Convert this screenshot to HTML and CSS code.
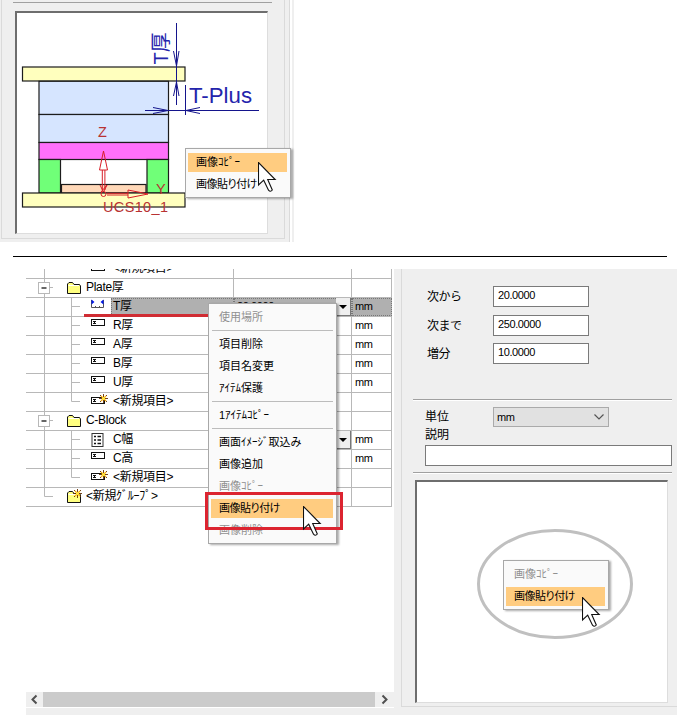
FILE: index.html
```html
<!DOCTYPE html>
<html lang="ja">
<head>
<meta charset="utf-8">
<title>画像貼り付け</title>
<link rel="stylesheet" href="styles.css">
</head>
<body>
<svg class="defs" width="0" height="0">
  <symbol id="cursor" viewBox="0 0 19 31"><path d="M.5.5V23L5.7 18.2 10.5 28.2Q12.5 30.5 14.3 28L9.7 17.5H17.2Z" fill="#fff" stroke="#111" stroke-width="1.1"/></symbol>
  <symbol id="g-group" viewBox="0 0 60 19"><path d="M18.5 0V19M23 8.5H27" stroke="#b8b8b8"/><rect x="12.5" y="3.5" width="11" height="11" fill="#fff" stroke="#b8b8b8"/><path d="M15.500 9H20.500" stroke="#000" stroke-width="1.200"/></symbol>
  <symbol id="g-item" viewBox="0 0 60 19"><path d="M18.500 0V19M45.500 0V19M45 8.500H54" fill="none" stroke="#b8b8b8"/></symbol>
  <symbol id="g-itemend" viewBox="0 0 60 19"><path d="M18.500 0V19M45.500 0V8.500H54" fill="none" stroke="#b8b8b8"/></symbol>
  <symbol id="g-end" viewBox="0 0 60 19"><path d="M18.500 0V8.500H27" fill="none" stroke="#b8b8b8"/></symbol>
  <symbol id="folder" viewBox="0 0 18 18"><path d="M1.500 14.500V5L3 3.500H6.500L8 5.500H13.500L14.500 7V14.500Z" fill="#ffff80" stroke="#111"/><path d="M2.500 6.500H13" stroke="#fff"/></symbol>
  <symbol id="field" viewBox="0 0 20 18"><rect x=".5" y="2.500" width="13" height="6" fill="#fff" stroke="#111"/><path d="M2 4.500H5M2 6.500H5M3.500 4V7" stroke="#111"/></symbol>
  <symbol id="spark" viewBox="0 0 9 9"><path d="M1 1L8 8M8 1L1 8M4.500 0V9M0 4.500H9" stroke="#663000" stroke-width=".9"/><path d="M2 2L7 7M7 2L2 7" stroke="#ffb000" stroke-width="1.200"/><circle cx="4.500" cy="4.500" r="1.500" fill="#ffe840"/></symbol>
  <symbol id="range" viewBox="0 0 20 18"><path d="M.5 2V9.500H12.500V2M4.500 8V9M8.500 8V9" fill="none" stroke="#555"/><path d="M.5 1.500L3.500 4 .5 6.500ZM12.500 1.500L9.500 4 12.500 6.500Z" fill="#0018e8"/></symbol>
  <symbol id="list" viewBox="0 0 20 18"><rect x="1" y="2.500" width="11" height="13" fill="#fff" stroke="#333"/><path d="M3 5.500H5M6.500 5.500H10M3 9H5M6.500 9H10M3 12.500H5M6.500 12.500H10" stroke="#111" stroke-width="1.500"/></symbol>
</svg>

<section class="preview">
  <div class="preview-frame">
    <div class="canvas">
      <svg class="drawing" width="250" height="220" viewBox="17 13 250 220">
        <g stroke="#1c1c1c" stroke-width="1.200">
          <rect x="22.500" y="67" width="162.500" height="14" fill="#ffffbe"/>
          <rect x="39" y="81.300" width="129.500" height="33.200" fill="#d6e5ff"/>
          <rect x="39" y="114.500" width="129.500" height="28" fill="#d6e5ff"/>
          <rect x="39" y="142.500" width="129.500" height="17" fill="#ff70fa"/>
          <rect x="39" y="159.500" width="21.500" height="33.500" fill="#70ff78"/>
          <rect x="147" y="159.500" width="21.500" height="33.500" fill="#70ff78"/>
          <rect x="61.500" y="184.500" width="84.500" height="8.500" fill="#ffd8b8"/>
          <rect x="22.500" y="193" width="162.500" height="14" fill="#ffffbe"/>
        </g>
        <g stroke="#14148c" fill="none">
          <path d="M176.500 23V105M145 110.500H259M185.500 85V115"/>
          <path d="M173.500 51L176.500 66 179 51M173.500 96L176.500 82 179 96M153 107.500L168 110.500 153 113.500M200 107.500L186 110.500 200 113.500"/>
        </g>
        <g class="dim">
          <text x="189" y="103" textLength="63" lengthAdjust="spacingAndGlyphs">T-Plus</text>
          <text class="dim-t" transform="translate(168 64.500) rotate(-90)">T厚</text>
        </g>
        <g stroke="#d81e28" fill="none">
          <path d="M103.500 151L99.500 170H107.500ZM102.300 170V190M104.900 170V190M100 185L103.500 192 107 185M101 192L107 185"/>
          <path d="M107 193.300H128M107 195H128M128 190L148 194 128 198Z"/>
          <circle cx="103.500" cy="194" r="2.500"/>
        </g>
        <g class="axis"><text x="98" y="137">Z</text><text x="156" y="194">Y</text><text x="103" y="212" textLength="65">UCS10_1</text></g>
      </svg>
    </div>
  </div>
  <div class="menu menu-copy">
    <div class="item active">画像ｺﾋﾟｰ</div>
    <div class="item tight">画像貼り付け</div>
    <svg class="cursor" width="19" height="31"><use href="#cursor"/></svg>
  </div>
</section>

<hr class="rule">

<main class="window">
  <section class="left">
    <div class="tree">
      <div class="row cut"><svg class="gut"><use href="#g-itemend"/></svg><svg class="ico"><use href="#field" y="2"/></svg><span class="name">&lt;新規項目&gt;</span><span class="val"></span><span class="unit"></span></div>
      <div class="row group"><svg class="gut"><use href="#g-group"/></svg><svg class="ico"><use href="#folder"/></svg><span class="name">Plate厚</span><span class="val"></span><span class="unit"></span></div>
      <div class="row selected"><svg class="gut"><use href="#g-item"/></svg><svg class="ico"><use href="#range"/></svg><span class="name">T厚</span><span class="val">20.0000<i class="drop"></i></span><span class="unit">mm</span></div>
      <div class="row"><svg class="gut"><use href="#g-item"/></svg><svg class="ico"><use href="#field"/></svg><span class="name">R厚</span><span class="val"></span><span class="unit">mm</span></div>
      <div class="row"><svg class="gut"><use href="#g-item"/></svg><svg class="ico"><use href="#field"/></svg><span class="name">A厚</span><span class="val"></span><span class="unit">mm</span></div>
      <div class="row"><svg class="gut"><use href="#g-item"/></svg><svg class="ico"><use href="#field"/></svg><span class="name">B厚</span><span class="val"></span><span class="unit">mm</span></div>
      <div class="row"><svg class="gut"><use href="#g-item"/></svg><svg class="ico"><use href="#field"/></svg><span class="name">U厚</span><span class="val"></span><span class="unit">mm</span></div>
      <div class="row"><svg class="gut"><use href="#g-itemend"/></svg><svg class="ico"><use href="#field" y="2"/><use href="#spark" x="8" y="1" width="9" height="9"/></svg><span class="name">&lt;新規項目&gt;</span><span class="val"></span><span class="unit"></span></div>
      <div class="row group"><svg class="gut"><use href="#g-group"/></svg><svg class="ico"><use href="#folder"/></svg><span class="name">C-Block</span><span class="val"></span><span class="unit"></span></div>
      <div class="row"><svg class="gut"><use href="#g-item"/></svg><svg class="ico"><use href="#list"/></svg><span class="name">C幅</span><span class="val"><i class="drop"></i></span><span class="unit">mm</span></div>
      <div class="row"><svg class="gut"><use href="#g-item"/></svg><svg class="ico"><use href="#field"/></svg><span class="name">C高</span><span class="val"></span><span class="unit">mm</span></div>
      <div class="row"><svg class="gut"><use href="#g-itemend"/></svg><svg class="ico"><use href="#field" y="2"/><use href="#spark" x="8" y="1" width="9" height="9"/></svg><span class="name">&lt;新規項目&gt;</span><span class="val"></span><span class="unit"></span></div>
      <div class="row group"><svg class="gut"><use href="#g-end"/></svg><svg class="ico"><use href="#folder"/><use href="#spark" x="8" y="1" width="9" height="9"/></svg><span class="name">&lt;新規ｸﾞﾙｰﾌﾟ&gt;</span><span class="val"></span><span class="unit"></span></div>
    </div>
    <div class="scrollbar">
      <svg width="17" height="15"><path d="M10.500 3.500L6.500 7.500 10.500 11.500" fill="none" stroke="#505050" stroke-width="2"/></svg>
      <div class="thumb"></div>
      <svg width="18" height="15"><path d="M7.500 3.500L11.500 7.500 7.500 11.500" fill="none" stroke="#505050" stroke-width="2"/></svg>
    </div>
    <div class="underline"></div>
    <div class="menu menu-tree">
      <div class="item off">使用場所</div>
      <div class="sep"></div>
      <div class="item">項目削除</div>
      <div class="item">項目名変更</div>
      <div class="item">ｱｲﾃﾑ保護</div>
      <div class="sep"></div>
      <div class="item">1ｱｲﾃﾑｺﾋﾟｰ</div>
      <div class="sep"></div>
      <div class="item">画面ｲﾒｰｼﾞ取込み</div>
      <div class="item">画像追加</div>
      <div class="item off">画像ｺﾋﾟｰ</div>
      <div class="item active tight">画像貼り付け</div>
      <div class="item off">画像削除</div>
      <div class="marker"></div>
      <svg class="cursor" width="19" height="31"><use href="#cursor"/></svg>
    </div>
  </section>

  <section class="props">
    <div class="ranges">
      <label><span>次から</span><span class="input">20.0000</span></label>
      <label><span>次まで</span><span class="input">250.0000</span></label>
      <label><span>増分</span><span class="input">10.0000</span></label>
    </div>
    <div class="details">
      <label><span>単位</span><span class="select">mm<svg width="12" height="8"><path d="M1.500 1.500L6 6 10.500 1.500" fill="none" stroke="#555" stroke-width="1.200"/></svg></span></label>
      <div class="desc">説明</div>
      <div class="input wide"></div>
    </div>
    <div class="canvas">
      <svg class="ring" width="158" height="112"><ellipse cx="79" cy="56" rx="76.500" ry="53.500" fill="none" stroke="#c0c0c0" stroke-width="3"/></svg>
      <div class="menu menu-paste">
        <div class="item off">画像ｺﾋﾟｰ</div>
        <div class="item active tight">画像貼り付け</div>
        <svg class="cursor" width="19" height="31"><use href="#cursor"/></svg>
      </div>
    </div>
  </section>
</main>
</body>
</html>
```

FILE: styles.css
```css
* { box-sizing: border-box; }
body {
  margin: 0;
  width: 685px;
  height: 719px;
  overflow: hidden;
  background: #fff;
  color: #000;
  font: 12px/18px "Liberation Sans", "Noto Sans CJK JP", sans-serif;
  white-space: nowrap;
}
svg { display: block; flex: none; }
.defs { position: absolute; }

.preview {
  position: relative;
  width: 294px;
  height: 242px;
  background: #efefef;
}
.preview-frame {
  width: 284px;
  height: 239px;
  margin-left: 1px;
  padding: 11px 0 0 14px;
  border: solid #dadada;
  border-width: 0 1px 1px;
  background: linear-gradient(#a0a0a0, #a0a0a0) 11px 2px / 259px 1px no-repeat;
}
.preview::after {
  content: "";
  position: absolute;
  left: 289px;
  top: 0;
  width: 2px;
  height: 242px;
  border-left: 1px solid #dadada;
  background: #fff;
}
.canvas {
  position: relative;
  width: 253px;
  height: 223px;
  background: #fff;
  border: 2px solid #6e6e6e;
  border-right: 1px solid #ddd;
  border-bottom: 1px solid #ddd;
}
.preview .canvas { margin-left: -1px; }
.dim { fill: #2424ac; font: 22px "Liberation Sans", "Noto Sans CJK JP", sans-serif; }
.dim-t { font-size: 20px; }
.axis { fill: #b83232; font: 14.5px "Liberation Sans", sans-serif; }

.menu {
  position: absolute;
  z-index: 2;
  width: 106px;
  padding: 2px;
  background: #fafafa;
  border: 1px solid #a8a8a8;
  box-shadow: 2px 1px 2px #0005;
  font-size: 11px;
  font-feature-settings: "palt";
}
.item {
  height: 22px;
  padding: 1px 0 1px 8px;
  line-height: 20px;
}
.item.off { color: #909090; }
.item.tight { letter-spacing: -.5px; }
.active {
  background: linear-gradient(#ffcc80, #ffcc80) 0 2px / 99px 19px no-repeat;
}
.sep { height: 5px; padding: 2px 1px; }
.sep::before { content: ""; display: block; height: 1px; background: #bcbcbc; }
.cursor { position: absolute; }
.menu-copy { left: 185px; top: 148px; height: 50px; }
.menu-copy .cursor { left: 72px; top: 13px; }

.rule {
  width: 654px;
  height: 1px;
  margin: 14px 0 12px 13px;
  border: 0;
  background: #000;
}

.window {
  display: grid;
  grid-template-columns: 368px 283px;
  width: 651px;
  height: 446px;
  margin-left: 26px;
  background: #efefef;
}
.left { position: relative; }
.tree { height: 423px; overflow: hidden; background: #fff; }
.row {
  display: flex;
  width: 366px;
  height: 19px;
  border-bottom: 1px solid #b8b8b8;
  line-height: 16px;
}
.row.cut { margin-top: -9px; }
.gut { width: 60px; height: 19px; margin-right: 5px; }
.ico { width: 20px; height: 18px; }
.name { width: 123px; height: 18px; padding-left: 2px; border-right: 1px solid #b8b8b8; letter-spacing: -.3px; }
.group .gut { margin-right: -21px; }
.group .name { width: 149px; padding-left: 1px; }
.val { position: relative; width: 118px; height: 18px; padding-left: 3px; border-right: 1px solid #b8b8b8; }
.unit { width: 40px; height: 18px; padding-left: 3px; border-right: 1px solid #b8b8b8; }
.selected .name, .selected .val, .selected .unit {
  background: #b0b0b0;
  outline: 1px dotted #777;
  outline-offset: -1px;
}
.val, .unit { font-size: 11px; letter-spacing: -.4px; }
.drop {
  position: absolute;
  right: 0;
  top: 0;
  width: 15px;
  height: 18px;
  background: #efefef;
  border: solid #777;
  border-width: 0 1px 1px 0;
}
.drop::after {
  content: "";
  position: absolute;
  left: 3px;
  top: 7px;
  border: 4px solid transparent;
  border-top-color: #000;
  border-bottom: 0;
}
.scrollbar { display: flex; height: 16px; width: 368px; border-bottom: 1px solid #fff; }
.thumb { width: 332px; height: 15px; background: #cbcbcb; }
.underline {
  position: absolute;
  left: 58px;
  top: 45px;
  width: 124px;
  height: 3px;
  background: #d02c33;
}
.menu-tree { left: 182px; top: 34px; width: 129px; height: 241px; }
.menu-tree .active { background-size: 122px 19px; }
.marker {
  position: absolute;
  left: -4px;
  top: 188px;
  width: 138px;
  height: 38px;
  border: 3px solid #dc2430;
}
.menu-tree .cursor { left: 94px; top: 202px; }

.props {
  width: 276px;
  height: 438px;
  margin-left: 7px;
  border: solid #dadada;
  border-width: 0 0 1px 1px;
}
.ranges { height: 130px; padding: 17px 0 0 25px; }
.ranges label { display: flex; align-items: center; height: 21px; margin-bottom: 8px; }
.ranges label:nth-child(2) { margin-bottom: 7px; }
.ranges label span:first-child { width: 66px; letter-spacing: -.5px; }
.input {
  width: 96px;
  height: 21px;
  padding-left: 4px;
  background: #fff;
  border: 1px solid #7a7a7a;
  line-height: 16px;
  font-size: 11px;
  letter-spacing: -.4px;
}
.details {
  width: 259px;
  height: 74px;
  margin-left: 11px;
  padding: 7px 0 0 12px;
  border: solid #a0a0a0;
  border-width: 1px 0;
  box-shadow: 0 1px #fff, inset 0 1px #fff;
}
.details label { display: flex; height: 20px; line-height: 20px; }
.details label span:first-child { width: 68px; }
.details label .select {
  display: flex;
  align-items: center;
  justify-content: space-between;
  width: 116px;
  height: 20px;
  padding: 0 3px;
  background: #e1e1e1;
  border: 1px solid #aaa;
  font-size: 11px;
  letter-spacing: -.4px;
}
.desc { height: 18px; line-height: 17px; }
.wide { width: 247px; }
.props .canvas { margin: 7px 0 0 13px; }
.ring { position: absolute; left: 59px; top: 46px; }
.menu-paste { left: 86px; top: 78px; height: 50px; }
.menu-paste .cursor { left: 78px; top: 36px; }
```
